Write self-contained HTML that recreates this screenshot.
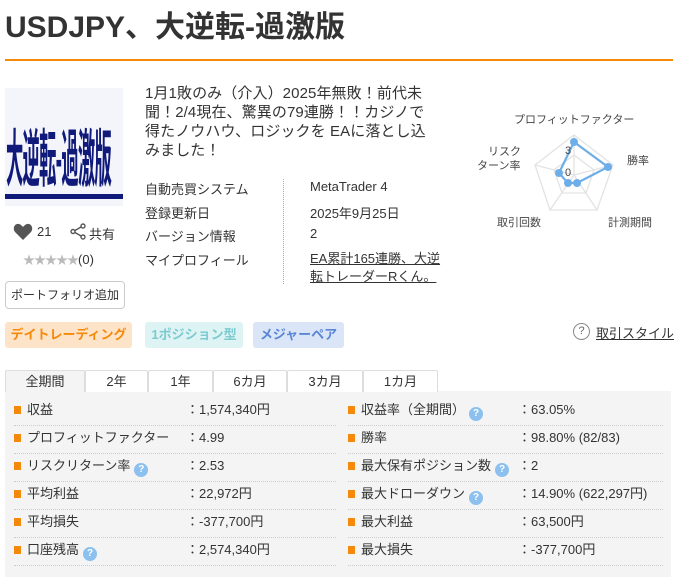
<!DOCTYPE html>
<html><head><meta charset="utf-8"><style>
*{margin:0;padding:0;box-sizing:border-box}
body{width:688px;height:577px;overflow:hidden;background:#fff;font-family:"Liberation Sans","Noto Sans CJK JP",sans-serif;color:#333;position:relative}
.a{position:absolute;white-space:nowrap}
h1{position:absolute;left:5px;top:2px;font-size:30px;font-weight:bold;color:#333}
.desc{position:absolute;left:145px;top:84px;width:292px;font-size:15px;line-height:19px;color:#333;white-space:normal;letter-spacing:0.1px}
.lbl{font-size:13px;color:#333}
.tag{position:absolute;top:322px;height:26px;border-radius:3px;font-size:13px;font-weight:bold;line-height:26px;text-align:center}
.tab{position:absolute;top:370px;height:22px;border:1px solid #ddd;border-bottom:none;background:#fff;font-size:13px;text-align:center;line-height:21px;border-radius:2px 2px 0 0}
.panel{position:absolute;left:5px;top:391px;width:666px;height:186px;background:#f4f4f4}
.sq{display:inline-block;width:7px;height:8px;background:#f58a0a;margin-right:6px;vertical-align:0}
.row{position:absolute;font-size:13px;height:28px;line-height:28px}
.sep{position:absolute;border-top:1px dotted #ccc;height:0}
.q{display:inline-block;width:14px;height:14px;border-radius:7px;background:#8cc0ee;color:#fff;font-size:10px;line-height:14px;text-align:center;font-weight:bold;margin-left:4px;vertical-align:-2px}
</style></head><body>
<h1>USDJPY、大逆転-過激版</h1>
<div class="a" style="left:5px;top:59px;width:668px;height:2px;background:#f58a0a"></div>
<div class="a" style="left:5px;top:88px;width:118px;height:118px;background:#f4f4fb;overflow:hidden">
<div style="position:absolute;left:1px;top:20px;font-size:24px;font-weight:bold;color:#101a7a;letter-spacing:-1px;transform:scale(0.72,2.6);transform-origin:0 0;font-family:'Noto Sans CJK JP',sans-serif">大逆転-過激版</div>
<div style="position:absolute;left:0;top:106px;width:118px;height:5px;background:#101a7a"></div>
</div>
<div class="desc">1月1敗のみ（介入）2025年無敗！前代未聞！2/4現在、驚異の79連勝！！カジノで得たノウハウ、ロジックを EAに落とし込みました！</div>
<div class="a lbl" style="left:145px;top:179px">自動売買システム</div>
<div class="a lbl" style="left:145px;top:203px">登録更新日</div>
<div class="a lbl" style="left:145px;top:226px">バージョン情報</div>
<div class="a lbl" style="left:145px;top:250px">マイプロフィール</div>
<div class="a" style="left:283px;top:179px;height:105px;border-left:1px dotted #aaa"></div>
<div class="a lbl" style="left:310px;top:179px">MetaTrader 4</div>
<div class="a lbl" style="left:310px;top:203px">2025年9月25日</div>
<div class="a lbl" style="left:310px;top:226px">2</div>
<div class="a lbl" style="left:310px;top:250px;line-height:18px;text-decoration:underline;white-space:normal;width:136px">EA累計165連勝、大逆転トレーダーRくん。</div>
<svg class="a" style="left:13px;top:223px" width="20" height="18" viewBox="0 0 20 18"><path d="M10 17 L2 9 C-1 5 2 0 6 1 C8 1.5 9 3 10 4 C11 3 12 1.5 14 1 C18 0 21 5 18 9 Z" fill="#555"/></svg>
<div class="a lbl" style="left:37px;top:224px">21</div>
<svg class="a" style="left:70px;top:223px" width="16" height="17" viewBox="0 0 16 17"><circle cx="13" cy="3" r="2" fill="none" stroke="#555" stroke-width="1.4"/><circle cx="3" cy="8.5" r="2" fill="none" stroke="#555" stroke-width="1.4"/><circle cx="13" cy="14" r="2" fill="none" stroke="#555" stroke-width="1.4"/><path d="M5 7.5 L11 4 M5 9.5 L11 13" stroke="#555" stroke-width="1.4"/></svg>
<div class="a lbl" style="left:89px;top:224px">共有</div>
<div class="a" style="left:23px;top:251px;font-size:12px;color:#bbb;letter-spacing:-1px">★★★★★<span style="color:#333;font-size:13px;letter-spacing:0">(0)</span></div>
<div class="a" style="left:5px;top:281px;width:120px;height:28px;border:1px solid #ccc;border-radius:4px;font-size:12px;line-height:26px;text-align:center">ポートフォリオ追加</div>
<svg class="a" style="left:470px;top:105px" width="218" height="130">
<g fill="none" stroke="#e3e3e3" stroke-width="1.3" transform="translate(-470,-105)">
<polygon points="574,135 613,165 597,210 550,210 535,165"/>
<polygon points="574,155 594,170 586,193 562,193 554,170"/>
<path d="M574,175 L574,135 M574,175 L613,165 M574,175 L597,210 M574,175 L550,210 M574,175 L535,165"/>
<polygon points="574,142 608,167 577,183 568,183 559,173" stroke="#6eaee8" stroke-width="2.2"/>
</g>
<g fill="#6eaee8" transform="translate(-470,-105)"><circle cx="574" cy="142" r="4"/><circle cx="608" cy="167" r="4"/><circle cx="577" cy="183" r="4"/><circle cx="568" cy="183" r="4"/><circle cx="559" cy="173" r="4"/></g>
<g font-size="11" fill="#444" font-family="Liberation Sans,Noto Sans CJK JP,sans-serif" transform="translate(-470,-105)">
<text x="514" y="123">プロフィットファクター</text><text x="627" y="164">勝率</text>
<text x="488" y="155">リスク</text><text x="477" y="169">ターン率</text>
<text x="497" y="226">取引回数</text><text x="608" y="226">計測期間</text>
<text x="565" y="154" font-size="11">3</text><text x="565" y="176">0</text></g>
</svg>
<div class="tag" style="left:5px;width:127px;background:#fde3c8;color:#f58a0a">デイトレーディング</div>
<div class="tag" style="left:145px;width:98px;background:#def3f4;color:#7ccbd0">1ポジション型</div>
<div class="tag" style="left:253px;width:91px;background:#dae6f8;color:#5b86d6">メジャーペア</div>
<div class="a" style="left:573px;top:323px;width:17px;height:17px;border:1px solid #888;border-radius:9px;font-size:11px;line-height:15px;text-align:center;color:#666">?</div>
<div class="a" style="left:596px;top:323px;font-size:13px;text-decoration:underline">取引スタイル</div>
<div class="panel"></div>
<div class="tab" style="left:5px;width:80px;background:#f4f4f4">全期間</div>
<div class="tab" style="left:85px;width:63px">2年</div>
<div class="tab" style="left:148px;width:65px">1年</div>
<div class="tab" style="left:213px;width:74px">6カ月</div>
<div class="tab" style="left:287px;width:76px">3カ月</div>
<div class="tab" style="left:363px;width:75px">1カ月</div>

<div class="row" style="left:14px;top:396px"><span class="sq"></span>収益</div><div class="row" style="left:186px;top:396px">：1,574,340円</div>
<div class="row" style="left:348px;top:396px"><span class="sq"></span>収益率（全期間）<span class="q">?</span></div><div class="row" style="left:518px;top:396px">：63.05%</div>
<div class="row" style="left:14px;top:424px"><span class="sq"></span>プロフィットファクター</div><div class="row" style="left:186px;top:424px">：4.99</div>
<div class="row" style="left:348px;top:424px"><span class="sq"></span>勝率</div><div class="row" style="left:518px;top:424px">：98.80% (82/83)</div>
<div class="row" style="left:14px;top:452px"><span class="sq"></span>リスクリターン率<span class="q">?</span></div><div class="row" style="left:186px;top:452px">：2.53</div>
<div class="row" style="left:348px;top:452px"><span class="sq"></span>最大保有ポジション数<span class="q">?</span></div><div class="row" style="left:518px;top:452px">：2</div>
<div class="row" style="left:14px;top:480px"><span class="sq"></span>平均利益</div><div class="row" style="left:186px;top:480px">：22,972円</div>
<div class="row" style="left:348px;top:480px"><span class="sq"></span>最大ドローダウン<span class="q">?</span></div><div class="row" style="left:518px;top:480px">：14.90% (622,297円)</div>
<div class="row" style="left:14px;top:508px"><span class="sq"></span>平均損失</div><div class="row" style="left:186px;top:508px">：-377,700円</div>
<div class="row" style="left:348px;top:508px"><span class="sq"></span>最大利益</div><div class="row" style="left:518px;top:508px">：63,500円</div>
<div class="row" style="left:14px;top:536px"><span class="sq"></span>口座残高<span class="q">?</span></div><div class="row" style="left:186px;top:536px">：2,574,340円</div>
<div class="row" style="left:348px;top:536px"><span class="sq"></span>最大損失</div><div class="row" style="left:518px;top:536px">：-377,700円</div>
<div class="sep" style="left:14px;top:425px;width:322px"></div><div class="sep" style="left:348px;top:425px;width:315px"></div>
<div class="sep" style="left:14px;top:453px;width:322px"></div><div class="sep" style="left:348px;top:453px;width:315px"></div>
<div class="sep" style="left:14px;top:481px;width:322px"></div><div class="sep" style="left:348px;top:481px;width:315px"></div>
<div class="sep" style="left:14px;top:509px;width:322px"></div><div class="sep" style="left:348px;top:509px;width:315px"></div>
<div class="sep" style="left:14px;top:537px;width:322px"></div><div class="sep" style="left:348px;top:537px;width:315px"></div>
<div class="sep" style="left:14px;top:565px;width:322px"></div><div class="sep" style="left:348px;top:565px;width:315px"></div>
</body></html>
